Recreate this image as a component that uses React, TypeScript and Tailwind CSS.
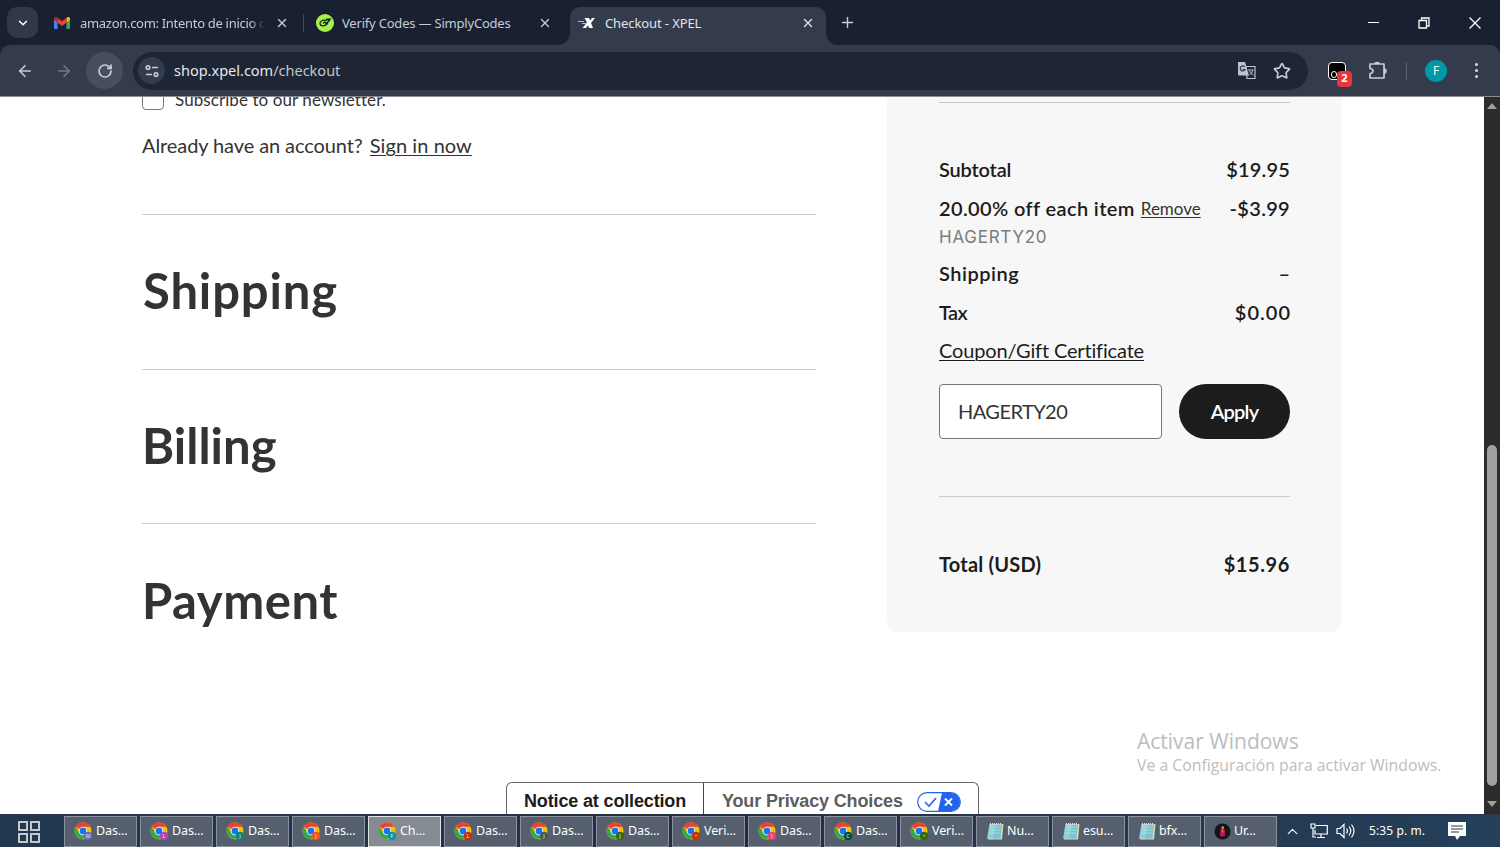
import { ArrowLeft, ArrowRight, ChevronDown, ChevronUp, Plus, RotateCw, Star, X } from "lucide-react";

const tasks = [
  { label: "Das...", badge: "M", color: "#5c6bc0" },
  { label: "Das...", badge: "L", color: "#ab47bc" },
  { label: "Das...", badge: "J", color: "#00897b" },
  { label: "Das...", badge: "J", color: "#f4511e" },
  { label: "Ch...", badge: "F", color: "#0097a7", active: true },
  { label: "Das...", badge: "L", color: "#bf360c" },
  { label: "Das...", badge: "J", color: "#455a64" },
  { label: "Das...", badge: "J", color: "#33691e" },
  { label: "Veri...", badge: "•", color: "#bf360c" },
  { label: "Das...", badge: "I", color: "#ec407a" },
  { label: "Das...", badge: "C", color: "#004d40" },
  { label: "Veri...", badge: "•", color: "#33691e" },
  { label: "Nu...", icon: "note" },
  { label: "esu...", icon: "note" },
  { label: "bfx...", icon: "note" },
  { label: "Ur...", icon: "app" },
];

function GmailIcon() {
  return (
    <svg viewBox="0 0 16 12" className="h-3 w-4 shrink-0">
      <path d="M0 2v9a1 1 0 0 0 1 1h2.6V5z" fill="#4285f4" />
      <path d="M16 2v9a1 1 0 0 1-1 1h-2.6V5z" fill="#34a853" />
      <path d="M12.4 1v4.6L16 3V1.8C16 .2 14.2-.5 13 .5z" fill="#fbbc04" />
      <path d="M3.6 1v4.6L0 3V1.8C0 .2 1.8-.5 3 .5z" fill="#c5221f" />
      <path d="M3.6 1 8 4.3 12.4 1v4.7L8 9 3.6 5.7z" fill="#ea4335" />
    </svg>
  );
}

function ChromeIcon({ badge, color }: { badge?: string; color?: string }) {
  return (
    <svg viewBox="0 0 19 19" className="h-[19px] w-[19px] shrink-0">
      <circle cx="9" cy="9" r="8.5" fill="#fbbc04" />
      <path d="M9 9 1.64 4.75A8.5 8.5 0 0 1 16.4 4.75H9z" fill="#ea4335" />
      <path d="M1.64 4.75A8.5 8.5 0 0 0 9 17.5L12.7 11 9 9 5.3 11z" fill="#34a853" />
      <circle cx="9" cy="9" r="4.3" fill="#fff" />
      <circle cx="9" cy="9" r="3.4" fill="#1a73e8" />
      <circle cx="14" cy="14" r="4.3" fill={color} />
      <text x="14" y="16" fontSize="5.5" textAnchor="middle" fill="#e5e7eb" fontFamily="Noto Sans, sans-serif">
        {badge}
      </text>
    </svg>
  );
}

function NotepadIcon() {
  return (
    <svg viewBox="0 0 18 18" className="h-[18px] w-[18px] shrink-0">
      <path d="M4 2h13.5L16 17.5H2z" fill="#e9d9a4" />
      <path d="M3.5 2H16l-1.5 14.500H1z" fill="#8fd0dc" />
      <path d="M10 2h6l-1.5 14.500H7z" fill="#6db9cb" opacity=".6" />
      <path d="M4 5h11M3.7 8h11M3.4 11h11" stroke="#c6edf2" strokeWidth=".6" />
      <path d="M4 2h12" stroke="#e5e7eb" strokeWidth="2" strokeDasharray="1 1" />
    </svg>
  );
}

function AppIcon() {
  return (
    <svg viewBox="0 0 18 18" className="h-[17px] w-[17px] shrink-0">
      <circle cx="9" cy="9" r="8.5" fill="#15141a" />
      <path d="M6.500 6.500h5V14h-5z" fill="#c2185b" />
      <circle cx="9.2" cy="5" r="1.5" fill="#d9902f" />
      <path d="M9.2 7v3" stroke="#f0a030" />
    </svg>
  );
}

function TabStrip() {
  return (
    <div className="flex h-[45px] bg-[#182032] text-[13px] text-[#c5cbd8]">
      <div className="ml-[7px] mt-[7px] flex h-[31px] w-[31px] items-center justify-center rounded-[10px] bg-[#30384a]">
        <ChevronDown size={14} strokeWidth={2.5} className="text-white" />
      </div>
      <div className="ml-4 flex h-[46px] w-[235px] items-center">
        <GmailIcon />
        <span className="ml-2.5 mt-px w-[185px] overflow-hidden whitespace-nowrap tracking-[-0.3px] [mask-image:linear-gradient(to_right,black_92%,transparent)]">
          amazon.com: Intento de inicio de
        </span>
        <X size={14} strokeWidth={2.4} className="ml-auto shrink-0" />
      </div>
      <div className="ml-[14px] mt-[14px] h-[18px] w-px bg-[#444b5b]" />
      <div className="ml-3 flex h-[46px] w-[236px] items-center">
        <svg viewBox="0 0 18 18" className="h-[18px] w-[18px] shrink-0">
          <circle cx="9" cy="9" r="9" fill="#a5f04b" />
          <path
            d="M11 6.500C6 5 3.500 8 4 10c.6 2.500 5 2.500 7 0 1-1.200 1.200-2.200 1-3M7 9.500l2-1.500 1 1.500 4-3.500M10 5.500l4-.5-2 2.500"
            fill="none"
            stroke="#162315"
            strokeWidth="1.3"
          />
        </svg>
        <span className="ml-2 mt-px whitespace-nowrap tracking-[-0.2px]">Verify Codes — SimplyCodes</span>
        <X size={14} strokeWidth={2.4} className="ml-auto shrink-0" />
      </div>
      <svg viewBox="0 0 12 12" className="ml-[6px] h-3 w-3 self-end">
        <path d="M12 0v12H0A12 12 0 0 0 12 0" fill="#343b4d" />
      </svg>
      <div className="mt-[7px] flex h-[38px] w-[256px] items-center rounded-t-[10px] bg-[#343b4d] pb-[6px] pl-2 pr-[11px] text-[#e1e4ec]">
        <svg viewBox="0 0 17 12" className="h-3 w-[17px] shrink-0">
          <path d="M0 4.500h6M4 6.500h4" stroke="#b5bac5" strokeWidth="1" />
          <path d="M6.500 1H11l1 2.500L14 1h3l-4 5 2 5h-4l-1-2.800L8 11H4.500L9 5.500z" fill="#fff" />
        </svg>
        <span className="ml-2.5 mt-px tracking-[-0.1px]">Checkout - XPEL</span>
        <X size={14} strokeWidth={2.4} className="ml-auto" />
      </div>
      <svg viewBox="0 0 12 12" className="h-3 w-3 self-end">
        <path d="M0 0v12h12A12 12 0 0 1 0 0" fill="#343b4d" />
      </svg>
      <Plus size={17} strokeWidth={2} className="ml-[1px] mt-[14px]" />
      <div className="ml-auto mr-[19px] flex h-[45px] items-center gap-[39px] text-white">
        <div className="h-px w-[11px] bg-white" />
        <svg viewBox="0 0 12 12" className="h-3 w-3" fill="none" stroke="currentColor" strokeWidth="1.3">
          <path d="M1 3.500h7.500V11H1zM3.500 3V1H11v8H9" />
        </svg>
        <svg viewBox="0 0 12 12" className="h-3 w-3" stroke="currentColor" strokeWidth="1.3">
          <path d="m.5.5 11 11m0-11-11 11" />
        </svg>
      </div>
    </div>
  );
}

function Toolbar() {
  return (
    <div className="h-[52px] bg-[#182032]">
      <div className="flex h-full items-center rounded-t-[10px] border-b border-[#8b8d96] bg-[#343b4d] text-[#c5cbd8]">
        <ArrowLeft size={18} strokeWidth={2.2} className="ml-4" />
        <ArrowRight size={18} strokeWidth={2.2} className="ml-[21px] text-[#747b8b]" />
        <div className="ml-[13px] flex h-[37px] w-[37px] items-center justify-center rounded-full bg-[#474f5e]">
          <RotateCw size={16} strokeWidth={2.6} />
        </div>
        <div className="ml-2.5 flex h-[38px] w-[1175px] items-center rounded-full bg-[#1e2535] pl-[5px]">
          <div className="flex h-[27px] w-[27px] items-center justify-center rounded-full bg-[#343b4d]">
            <svg viewBox="0 0 14 14" className="h-3.5 w-3.5" fill="none" stroke="currentColor" strokeWidth="1.6">
              <circle cx="3" cy="3.500" r="1.8" />
              <path d="M7 3.500h6M1 10.500h6" />
              <circle cx="11" cy="10.500" r="1.8" />
            </svg>
          </div>
          <p className="ml-[9px] text-[14.5px] text-[#c0c5d0]">
            <span className="text-[#e6e8ee]">shop.xpel.com</span>/checkout
          </p>
          <svg viewBox="0 0 20 20" className="ml-auto h-5 w-5">
            <path d="M9 5.500h9v12h-8z" fill="none" stroke="#bcc2ce" strokeWidth="1.2" />
            <path d="M1 1h7l4 13.500H2a1 1 0 0 1-1-1z" fill="#bcc2ce" />
            <path d="M7.800 6A2.500 2.500 0 1 0 8 8.500H5.800" fill="none" stroke="#30384a" strokeWidth="1.2" />
            <path d="M11 9h5.500m-1 0c0 3-2 4-3 5m0-4c1 2 2 3 4 4" fill="none" stroke="#bcc2ce" strokeWidth="1" />
          </svg>
          <Star size={18} strokeWidth={2.2} className="ml-4 mr-[17px]" />
        </div>
        <div className="relative ml-5 h-[18px] w-[18px] rounded-[4px] border border-white bg-black">
          <div className="absolute bottom-px left-[2px] h-[7px] w-[6px] rounded-full border-[1.5px] border-white" />
          <div className="absolute left-[8px] top-[8px] flex h-4 w-[15px] items-center justify-center rounded-[4px] bg-[#e93438] text-[11px] font-bold text-white">
            2
          </div>
        </div>
        <svg viewBox="0 0 20 20" className="ml-[22px] h-5 w-5" fill="none" stroke="currentColor" strokeWidth="1.7">
          <path d="M2 3h14v14H2v-4.500c4 0 4-5 0-5z" strokeLinejoin="round" />
          <path d="M7 3c0-2 4-2 4 0M16 8c2.500 0 2.500 4 0 4" fill="currentColor" />
        </svg>
        <div className="ml-[18px] h-[18px] w-px bg-[#5b6272]" />
        <div className="ml-[18px] flex h-[22px] w-[22px] items-center justify-center rounded-full bg-[#0097a7] text-xs text-white">F</div>
        <div className="ml-[28px] flex flex-col gap-[3px]">
          <div className="h-[3px] w-[3px] rounded-full bg-[#d5d9e2]" />
          <div className="h-[3px] w-[3px] rounded-full bg-[#d5d9e2]" />
          <div className="h-[3px] w-[3px] rounded-full bg-[#d5d9e2]" />
        </div>
      </div>
    </div>
  );
}

function CheckoutSteps() {
  return (
    <div className="ml-[142px] w-[674px] font-['Lato',sans-serif] text-[#333]">
      <div className="-mt-2 flex h-[21px] items-center">
        <div className="h-[21px] w-[22px] rounded border border-[#777] bg-white" />
        <span className="ml-[11px] mt-px text-[17px] tracking-[0.08px]">Subscribe to our newsletter.</span>
      </div>
      <p className="mt-[21px] text-[20px] leading-7 tracking-[-0.09px]">
        Already have an account?{" "}
        <a className="ml-[2px] tracking-[0.07px] underline decoration-1 underline-offset-2">Sign in now</a>
      </p>
      <div className="mt-[55px] h-[154.5px] border-t border-[#ccc] pt-[45px]">
        <h2 className="ml-px text-[49px] font-bold leading-[60px] tracking-[0.85px]">Shipping</h2>
      </div>
      <div className="h-[154.5px] border-t border-[#ccc] pt-[45px]">
        <h2 className="text-[49px] font-bold leading-[60px]">Billing</h2>
      </div>
      <div className="border-t border-[#ccc] pt-[46px]">
        <h2 className="text-[49px] font-bold leading-[60px] tracking-[0.55px]">Payment</h2>
      </div>
    </div>
  );
}

function OrderSummary() {
  return (
    <div className="ml-[71px] h-[535px] w-[455px] rounded-b-xl bg-[#f7f7f7] px-[52px] pt-[5px] font-['Lato',sans-serif] text-[20px] text-[#1c1c1c]">
      <div className="h-px bg-[#ccc]" />
      <div className="mt-[52px] flex h-[28px] items-center justify-between font-semibold">
        <span className="tracking-[-0.2px]">Subtotal</span>
        <span className="tracking-[0.15px]">$19.95</span>
      </div>
      <div className="mt-[11px] flex h-[28px] items-center whitespace-nowrap font-semibold">
        <span className="tracking-[0.38px]">20.00% off each item</span>
        <a className="ml-1.5 mt-px text-[17px] font-normal text-[#333] underline decoration-1 underline-offset-2">Remove</a>
        <span className="ml-auto tracking-[0.3px]">-$3.99</span>
      </div>
      <p className="mt-[2px] h-[27px] font-['Inter',sans-serif] text-[17px] leading-[27px] tracking-[0.75px] text-[#7b7b7b]">
        HAGERTY20
      </p>
      <div className="mt-[8px] flex h-[28px] items-center justify-between font-semibold">
        <span className="tracking-[0.5px]">Shipping</span>
        <span>–</span>
      </div>
      <div className="mt-[11px] flex h-[28px] items-center justify-between font-semibold">
        <span className="tracking-[-0.6px]">Tax</span>
        <span className="-mr-px tracking-[1px]">$0.00</span>
      </div>
      <a className="mt-[10px] block h-[28px] leading-[28px] tracking-[-0.16px] underline decoration-1 underline-offset-2">
        Coupon/Gift Certificate
      </a>
      <div className="mt-[20px] flex justify-between">
        <div className="flex h-[55px] w-[223px] items-center rounded border border-[#767676] bg-white pb-[2px] pl-[18px] tracking-[-0.55px] text-[#333]">
          HAGERTY20
        </div>
        <div className="flex h-[55px] w-[111px] items-center justify-center rounded-full bg-[#1c1c1c] pb-px font-semibold tracking-[-0.8px] text-white">
          Apply
        </div>
      </div>
      <div className="mt-[57px] h-px bg-[#ccc]" />
      <div className="mt-[53px] flex h-[28px] items-center justify-between font-bold">
        <span className="tracking-[0.2px]">Total (USD)</span>
        <span className="tracking-[0.6px]">$15.96</span>
      </div>
    </div>
  );
}

function Scrollbar() {
  return (
    <div className="ml-auto flex h-full w-4 flex-col items-center bg-[#2c2c2c]">
      <svg viewBox="0 0 10 6" className="mt-[6px] h-[6px] w-[10px]">
        <path d="M0 6 5 0l5 6z" fill="#9f9f9f" />
      </svg>
      <div className="mt-[336px] h-[341px] w-[10px] rounded-full bg-[#9f9f9f]" />
      <svg viewBox="0 0 10 6" className="mt-[15px] h-[6px] w-[10px]">
        <path d="M0 0h10L5 6z" fill="#9f9f9f" />
      </svg>
    </div>
  );
}

function PrivacyBar() {
  return (
    <div className="absolute bottom-0 left-[506px] flex h-8 w-[473px] rounded-t-md border border-b-0 border-[#666] bg-white font-['Liberation_Sans',sans-serif] text-[18px] font-bold leading-[37px] tracking-[-0.15px]">
      <div className="w-[197px] whitespace-nowrap border-r border-[#444] pl-[17px] text-[#1c1c1c]">Notice at collection</div>
      <div className="flex items-start whitespace-nowrap pl-[18px] text-[#5d5d5d]">
        <span>Your Privacy Choices</span>
        <svg viewBox="0 0 44 20" className="ml-[14px] mt-[9px] h-5 w-11">
          <rect x=".7" y=".7" width="42.6" height="18.6" rx="9.3" fill="#fff" stroke="#2463eb" strokeWidth="1.2" />
          <path d="M25 1h9a9 9 0 0 1 0 18H21z" fill="#2463eb" />
          <path d="m8 10 4 4 7-8" fill="none" stroke="#2463eb" strokeWidth="1.6" />
          <path d="m28 6.500 7 7m0-7-7 7" stroke="#fff" strokeWidth="1.8" />
        </svg>
      </div>
    </div>
  );
}

function Taskbar() {
  return (
    <div className="flex h-[33px] items-center border-t border-[#283545] bg-gradient-to-r from-[#20384f] via-[#252c42] to-[#24405b] text-xs text-white">
      <svg viewBox="0 0 22 22" className="ml-[18px] mt-px h-[22px] w-[22px]" fill="none" stroke="#c3c8ce" strokeWidth="2">
        <path d="M1 1h8v8H1zM13 1h8v8h-8zM1 13h8v8H1zM13 13h8v8h-8z" />
      </svg>
      <div className="ml-6 flex w-[1213px] shrink-0 justify-between">
        {tasks.map((task, index) => (
          <div
            key={index}
            className={`flex h-[31px] w-[73px] items-center border pl-[9px] ${
              task.active ? "border-[#e0e2e4] bg-[#858b92]" : "border-[#8b929d] bg-[#555f6e]"
            }`}
          >
            {task.icon === "note" ? (
              <NotepadIcon />
            ) : task.icon === "app" ? (
              <AppIcon />
            ) : (
              <ChromeIcon badge={task.badge} color={task.color} />
            )}
            <span className="ml-[3px] text-[12.5px] tracking-[-0.1px]">{task.label}</span>
          </div>
        ))}
      </div>
      <ChevronUp size={17} strokeWidth={1.5} className="ml-[7px]" />
      <svg viewBox="0 0 18 16" className="ml-[9px] h-4 w-[18px]" fill="none" stroke="currentColor" strokeWidth="1.2">
        <path d="M6 2.500h11.300v8.500H5V7M11 11v3M7 14.500h8M1 1h4v4H1zM3 5v9h3" />
      </svg>
      <svg viewBox="0 0 19 16" className="ml-2 h-4 w-[19px]" fill="none" stroke="currentColor" strokeWidth="1.2">
        <path d="M1 5.500h3l4-4v13l-4-4H1zM10.500 5.500q2 2.500 0 5M13 3.500q3.500 4.500 0 9M15.500 1.500q5 6.500 0 13" />
      </svg>
      <span className="ml-[14px] whitespace-nowrap tracking-[0.1px]">5:35 p. m.</span>
      <svg viewBox="0 0 18 18" className="ml-[23px] h-[18px] w-[18px]">
        <path d="M0 0h18v14h-6l-3 4-2-4H0z" fill="#fff" />
        <path d="M3 4h12M3 7h12M3 10h8" stroke="#26374e" strokeWidth="1.2" />
      </svg>
    </div>
  );
}

export default function App() {
  return (
    <div className="h-[847px] w-[1500px] overflow-hidden bg-white font-['Noto_Sans',sans-serif]">
      <TabStrip />
      <Toolbar />
      <div className="relative flex h-[717px] items-start overflow-hidden">
        <CheckoutSteps />
        <OrderSummary />
        <Scrollbar />
        <PrivacyBar />
        <div className="absolute left-[1137px] top-[630px] whitespace-nowrap font-['Open_Sans',sans-serif] text-[#bdbdbd]">
          <p className="text-[21px] leading-7">Activar Windows</p>
          <p className="mt-[-2px] text-[15.8px] leading-6">Ve a Configuración para activar Windows.</p>
        </div>
      </div>
      <Taskbar />
    </div>
  );
}
